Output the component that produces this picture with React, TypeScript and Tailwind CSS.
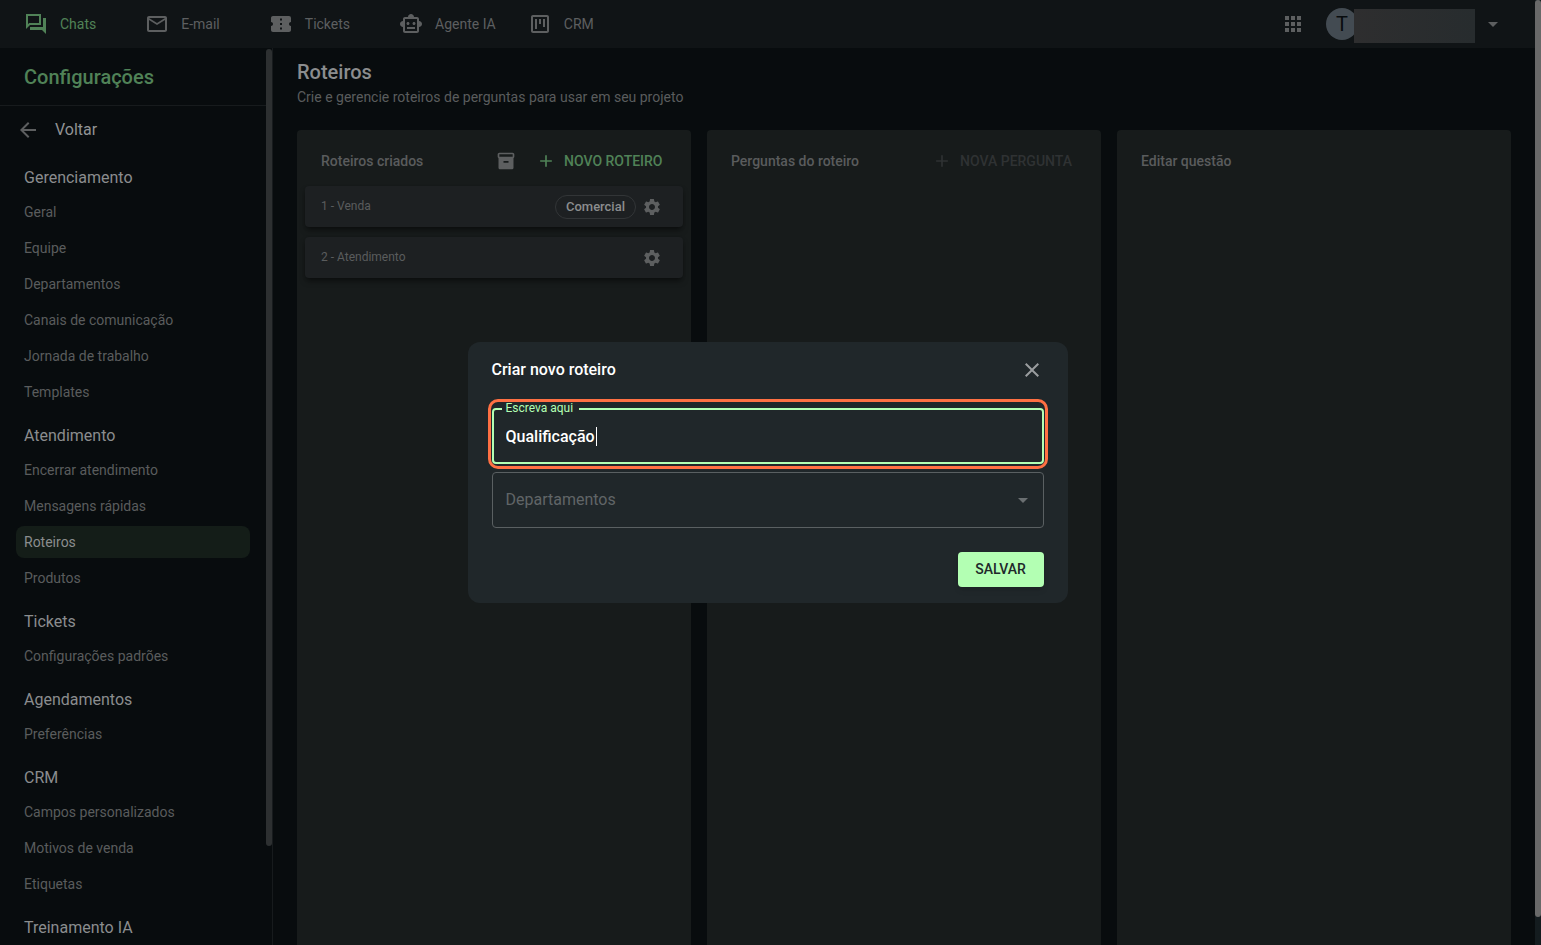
import type { ReactNode } from "react";
import type { IconType } from "react-icons";
import {
  MdAdd,
  MdApps,
  MdArrowBack,
  MdArrowDropDown,
  MdClose,
  MdConfirmationNumber,
  MdInventory2,
  MdMailOutline,
  MdOutlineSmartToy,
  MdOutlineViewKanban,
  MdSettings,
} from "react-icons/md";

type NavItem = {
  label: string;
  icon: IconType | typeof ForumIcon;
  className: string;
};

type MenuSection = {
  title: string;
  items: string[];
};

type Script = {
  name: string;
  department?: string;
};

function ForumIcon({ className }: { className?: string }) {
  return (
    <svg viewBox="0 0 24 24" fill="currentColor" className={className} aria-hidden="true">
      <path d="M15 4v7H5.17L4 12.17V4h11m2-2H2v15l4-4h11V2zm5 4h-3v9H6v3h12l4 4V6z" />
    </svg>
  );
}

const NAV_ITEMS: NavItem[] = [
  { label: "Chats", icon: ForumIcon, className: "text-[#508257]" },
  { label: "E-mail", icon: MdMailOutline, className: "ml-[49px] text-[#5d5f60]" },
  { label: "Tickets", icon: MdConfirmationNumber, className: "ml-[49px] text-[#5d5f60]" },
  { label: "Agente IA", icon: MdOutlineSmartToy, className: "ml-[49px] text-[#5d5f60]" },
  { label: "CRM", icon: MdOutlineViewKanban, className: "ml-8 text-[#5d5f60]" },
];

const MENU: MenuSection[] = [
  {
    title: "Gerenciamento",
    items: [
      "Geral",
      "Equipe",
      "Departamentos",
      "Canais de comunicação",
      "Jornada de trabalho",
      "Templates",
    ],
  },
  {
    title: "Atendimento",
    items: ["Encerrar atendimento", "Mensagens rápidas", "Roteiros", "Produtos"],
  },
  { title: "Tickets", items: ["Configurações padrões"] },
  { title: "Agendamentos", items: ["Preferências"] },
  { title: "CRM", items: ["Campos personalizados", "Motivos de venda", "Etiquetas"] },
  { title: "Treinamento IA", items: [] },
];

const SCRIPTS: Script[] = [
  { name: "1 - Venda", department: "Comercial" },
  { name: "2 - Atendimento" },
];

function Header() {
  return (
    <header className="flex h-12 shrink-0 items-center justify-between bg-[#101416] pl-6 pr-[30px]">
      <nav className="flex items-center">
        {NAV_ITEMS.map(({ label, icon: Icon, className }) => (
          <a key={label} href="#" className={`flex items-center gap-3 text-sm ${className}`}>
            <Icon className="size-6" />
            {label}
          </a>
        ))}
      </nav>

      <div className="flex items-center">
        <button type="button" aria-label="Aplicativos" className="mr-[21px] text-[#5d5f60]">
          <MdApps className="size-6" />
        </button>
        <button type="button" aria-label="Conta" className="flex items-center">
          <span className="flex size-8 items-center justify-center rounded-full bg-[#434b52] text-xl text-[#080c0e]">
            T
          </span>
          <span className="z-10 -ml-1 mt-1 h-[34px] w-[121px] bg-linear-to-r from-[#2e2e2f] to-[#272c2e]" />
          <MdArrowDropDown className="ml-1.5 size-6 text-[#5d5f60]" />
        </button>
      </div>
    </header>
  );
}

function Sidebar() {
  return (
    <aside className="flex w-[273px] shrink-0 border-r border-[#171b1d]">
      <div className="flex min-w-0 flex-1 flex-col overflow-hidden">
        <h1 className="flex h-[58px] shrink-0 items-center border-b border-[#171b1d] pl-6 text-xl font-medium text-[#508257]">
          Configurações
        </h1>
        <a href="#" className="flex h-11 shrink-0 items-center gap-[15px] pl-4 pt-1 text-[#919394]">
          <MdArrowBack className="size-6 text-[#5d5f60]" />
          <span>Voltar</span>
        </a>

        {MENU.map((section) => (
          <section key={section.title} className="shrink-0">
            <h2 className="pb-[7px] pl-6 pt-[17px] text-base leading-[22px] text-[#8b8d8e]">
              {section.title}
            </h2>
            <ul className="flex flex-col gap-1 px-4">
              {section.items.map((item) => (
                <li key={item}>
                  <a
                    href="#"
                    className={`flex h-8 items-center rounded-lg px-2 text-sm ${
                      item === "Roteiros" ? "bg-[#141d18] text-[#8b8d8e]" : "text-[#5a5c5d]"
                    }`}
                  >
                    {item}
                  </a>
                </li>
              ))}
            </ul>
          </section>
        ))}
      </div>

      {/* barra de rolagem do menu */}
      <div className="w-1.5 pt-px">
        <div className="h-[89%] rounded-full bg-[#2d3031]" />
      </div>
    </aside>
  );
}

function Column({
  title,
  actions,
  children,
}: {
  title: string;
  actions?: ReactNode;
  children?: ReactNode;
}) {
  return (
    <section className="rounded-t bg-[#171b1b] px-2">
      <div className="flex h-14 items-center justify-between px-4 pt-1.5">
        <h3 className="text-sm font-medium text-[#5a5c5d]">{title}</h3>
        {actions}
      </div>
      {children}
    </section>
  );
}

function ScriptCard({ name, department }: Script) {
  return (
    <li className="flex h-[41px] items-center justify-between rounded bg-[#1d2022] pl-4 pr-[21px] shadow-md shadow-black/40">
      <span className="pb-0.5 text-xs text-[#5a5c5d]">{name}</span>
      <div className="flex items-center gap-1.5">
        {department && (
          <span className="flex h-6 items-center rounded-full border border-[#323537] px-2.5 text-[13px] font-medium text-[#8b8d8e]">
            {department}
          </span>
        )}
        <button type="button" aria-label={`Configurar ${name}`} className="text-[#5d5f60]">
          <MdSettings className="size-5" />
        </button>
      </div>
    </li>
  );
}

function Scripts() {
  return (
    <main className="flex min-w-0 flex-1 flex-col px-6 pt-3">
      <h2 className="text-xl leading-6 font-medium text-[#8b8d8e]">Roteiros</h2>
      <p className="mt-1 text-sm leading-[18px] text-[#5a5c5d]">
        Crie e gerencie roteiros de perguntas para usar em seu projeto
      </p>

      <div className="mt-6 grid flex-1 grid-cols-3 gap-4">
        <Column
          title="Roteiros criados"
          actions={
            <div className="flex items-center gap-5">
              <button type="button" aria-label="Arquivados" className="text-[#5d5f60]">
                <MdInventory2 className="size-5" />
              </button>
              <button
                type="button"
                className="flex w-[131px] items-center gap-2 text-sm font-medium text-[#508257]"
              >
                <MdAdd className="size-5" />
                NOVO ROTEIRO
              </button>
            </div>
          }
        >
          <ul className="flex flex-col gap-2.5">
            {SCRIPTS.map((script) => (
              <ScriptCard key={script.name} {...script} />
            ))}
          </ul>
        </Column>
        <Column
          title="Perguntas do roteiro"
          actions={
            <button
              type="button"
              disabled
              className="flex w-[145px] items-center gap-2 text-sm font-medium text-[#2f3233]"
            >
              <MdAdd className="size-5" />
              NOVA PERGUNTA
            </button>
          }
        />
        <Column title="Editar questão" />
      </div>
    </main>
  );
}

function NewScriptDialog() {
  return (
    <div className="absolute inset-0 z-20 flex items-center justify-center">
      <form
        role="dialog"
        aria-labelledby="dialog-title"
        className="w-[600px] rounded-xl bg-[#20272a] px-6 py-4"
      >
        <div className="flex items-center justify-between">
          <h2 id="dialog-title" className="text-base font-medium text-white">
            Criar novo roteiro
          </h2>
          <button type="button" aria-label="Fechar" className="text-[#9a9d9f]">
            <MdClose className="size-6" />
          </button>
        </div>

        <div className="relative mt-[26px]">
          <input
            id="script-name"
            type="text"
            defaultValue="Qualificação"
            className="block h-14 w-full rounded border-2 border-[#b3ffb3] px-3 text-base font-medium text-white outline-none"
          />
          <label
            htmlFor="script-name"
            className="absolute -top-1.5 left-2.5 bg-[#20272a] pl-1 pr-1.5 text-xs leading-3 text-[#b3ffb3]"
          >
            Escreva aqui
          </label>
          {/* cursor de texto */}
          <span className="pointer-events-none absolute left-[104px] top-[19px] h-[19px] w-px bg-white" />
          {/* destaque do campo */}
          <span className="pointer-events-none absolute -inset-x-1 -bottom-[5px] -top-[9px] rounded-[10px] border-3 border-[#ff7043]" />
        </div>

        <div className="relative mt-2">
          <select
            aria-label="Departamentos"
            className="block h-14 w-full appearance-none rounded border border-[#5a6062] px-[13px] text-base text-[#606567] outline-none"
          >
            <option>Departamentos</option>
          </select>
          <MdArrowDropDown className="pointer-events-none absolute right-[9px] top-4 size-6 text-[#6a6f71]" />
        </div>

        <div className="mt-6 flex justify-end">
          <button
            type="submit"
            className="h-[35px] w-[86px] rounded bg-[#b3ffb3] pb-0.5 text-sm font-medium text-[#20272a] shadow-md"
          >
            SALVAR
          </button>
        </div>
      </form>
    </div>
  );
}

export default function App() {
  return (
    <div className="flex h-screen overflow-hidden bg-[#080c0e] font-[Roboto,sans-serif]">
      <div className="relative flex min-w-0 flex-1 flex-col">
        <Header />
        <div className="flex min-h-0 flex-1">
          <Sidebar />
          <Scripts />
        </div>
        <NewScriptDialog />
      </div>

      {/* barra de rolagem da página */}
      <div className="w-1.5 bg-[#141c1f]">
        <div className="h-[97%] rounded-full bg-[#696969]" />
      </div>
    </div>
  );
}
